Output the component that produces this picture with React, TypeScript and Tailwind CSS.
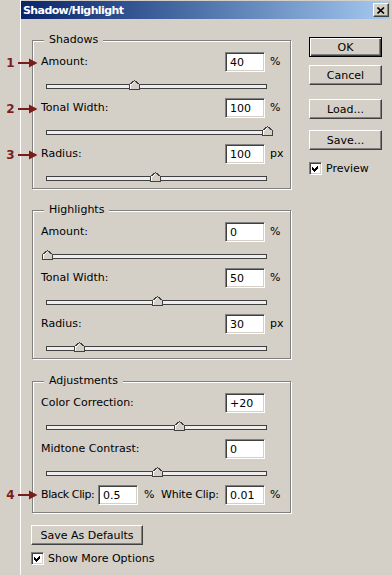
import type { ReactNode } from 'react';

interface SliderRow {
  label: string;
  value: string;
  unit: string;
  thumb: number;
}

const shadows: SliderRow[] = [
  { label: 'Amount:', value: '40', unit: '%', thumb: 88 },
  { label: 'Tonal Width:', value: '100', unit: '%', thumb: 221 },
  { label: 'Radius:', value: '100', unit: 'px', thumb: 109 },
];

const highlights: SliderRow[] = [
  { label: 'Amount:', value: '0', unit: '%', thumb: 1 },
  { label: 'Tonal Width:', value: '50', unit: '%', thumb: 111 },
  { label: 'Radius:', value: '30', unit: 'px', thumb: 33 },
];

const adjustments: SliderRow[] = [
  { label: 'Color Correction:', value: '+20', unit: '', thumb: 133 },
  { label: 'Midtone Contrast:', value: '0', unit: '', thumb: 111 },
];

// callouts drawn over the dialog, y = top of the 14px strip
const callouts = [
  { n: '1', top: 'top-[56px]' },
  { n: '2', top: 'top-[102px]' },
  { n: '3', top: 'top-[148px]' },
  { n: '4', top: 'top-[488px]' },
];

function Field({ value }: { value: string }) {
  return (
    <div className="w-[40px] h-[20px] shrink-0 bg-white border border-t-[#808080] border-l-[#808080] border-r-white border-b-white shadow-[inset_1px_1px_0_#404040,inset_-1px_-1px_0_#d4d0c8] pl-[4px] flex items-center leading-none">
      {value}
    </div>
  );
}

function Thumb() {
  return (
    <svg width="11" height="10" viewBox="0 0 11 10" shapeRendering="crispEdges">
      <polygon points="0.5,9.5 0.5,4.5 5.5,0.5 10.5,4.5 10.5,9.5" fill="#d4d0c8" stroke="#404040" />
      <polyline points="1.5,9 1.5,5 5.5,1.7" fill="none" stroke="#ffffff" />
    </svg>
  );
}

function Slider({ thumb }: { thumb: number }) {
  return (
    <div className="relative mt-[12px] ml-[13px] w-[221px] h-[5px] border border-[#404040] bg-[#eeeeee]">
      <div className="absolute -bottom-[2px] h-[10px]" style={{ left: thumb - 6 }}>
        <Thumb />
      </div>
    </div>
  );
}

function Row({ row }: { row: SliderRow }) {
  return (
    <div className="flex flex-col">
      <div className="flex items-center h-[20px] pl-[8px]">
        <span className="flex-1 whitespace-nowrap">{row.label}</span>
        <Field value={row.value} />
        <span className="ml-[5px] w-[20px]">{row.unit}</span>
      </div>
      <Slider thumb={row.thumb} />
    </div>
  );
}

function GroupBox({ title, children }: { title: string; children: ReactNode }) {
  return (
    <div className="relative ml-[1px] w-[259px] border border-[#808080] shadow-[inset_1px_1px_0_#ffffff,1px_1px_0_#ffffff] pt-[11px] pb-[7px] flex flex-col gap-[9px]">
      <span className="absolute left-[11px] -top-[8px] px-[5px] bg-[#d4d0c8] leading-[13px]">{title}</span>
      {children}
    </div>
  );
}

function Button({ label, main, className = '' }: { label: string; main?: boolean; className?: string }) {
  const edge = main
    ? 'border-black shadow-[inset_1px_1px_0_#ffffff,inset_-1px_-1px_0_#404040,inset_-2px_-2px_0_#808080]'
    : 'border-t-white border-l-white border-r-[#404040] border-b-[#404040] shadow-[inset_-1px_-1px_0_#808080]';
  return (
    <div className={`h-[20px] border bg-[#d4d0c8] flex items-center justify-center leading-none ${edge} ${className}`}>
      {label}
    </div>
  );
}

function CheckBox() {
  return (
    <div className="w-[13px] h-[13px] shrink-0 bg-white border border-t-[#808080] border-l-[#808080] border-r-white border-b-white shadow-[inset_1px_1px_0_#404040,inset_-1px_-1px_0_#d4d0c8] flex items-center justify-center">
      <svg width="7" height="7" viewBox="0 0 7 7" shapeRendering="crispEdges">
        <polygon points="0,2 2,4 6,0 6,3 2,7 0,5" fill="#000000" />
      </svg>
    </div>
  );
}

export default function App() {
  return (
    <div className="relative w-[392px] h-[575px] overflow-hidden bg-[#d4d0c8] flex font-['DejaVu_Sans',sans-serif] text-[11px] text-black">
      <div className="w-[20px] shrink-0" />

      <div className="w-[372px] shrink-0 border-l border-white pr-[2px] pt-[1px] flex flex-col">
        {/* caption */}
        <div className="h-[18px] bg-linear-to-r from-[#0a246a] to-[#a6caf0] flex items-center justify-between pl-[2px] pr-[1px]">
          <span className="text-white font-bold tracking-[-0.6px] leading-none">Shadow/Highlight</span>
          <div className="w-[16px] h-[14px] bg-[#d4d0c8] border border-t-white border-l-white border-r-[#404040] border-b-[#404040] shadow-[inset_-1px_-1px_0_#808080] flex items-center justify-center">
            <svg width="8" height="7" viewBox="0 0 8 7">
              <path d="M0.5 0.5 L7 6.5 M7 0.5 L0.5 6.5" stroke="#000000" strokeWidth="1.6" />
            </svg>
          </div>
        </div>

        <div className="flex pl-[10px]">
          <div className="w-[261px] shrink-0 pt-[21px] flex flex-col">
            <GroupBox title="Shadows">
              {shadows.map((r) => (
                <Row key={r.label} row={r} />
              ))}
            </GroupBox>

            <div className="mt-[21px]">
              <GroupBox title="Highlights">
                {highlights.map((r) => (
                  <Row key={r.label} row={r} />
                ))}
              </GroupBox>
            </div>

            <div className="mt-[22px]">
              <GroupBox title="Adjustments">
                {adjustments.map((r) => (
                  <Row key={r.label} row={r} />
                ))}
                <div className="flex items-center h-[20px] pl-[8px]">
                  <span className="w-[57px] tracking-[-0.4px] whitespace-nowrap">Black Clip:</span>
                  <Field value="0.5" />
                  <span className="ml-[6px] w-[17px]">%</span>
                  <span className="w-[64px] tracking-[-0.2px] whitespace-nowrap">White Clip:</span>
                  <Field value="0.01" />
                  <span className="ml-[5px] w-[20px]">%</span>
                </div>
              </GroupBox>
            </div>

            <Button label="Save As Defaults" className="mt-[12px] w-[112px]" />
            <div className="mt-[7px] flex items-center gap-[4px]">
              <CheckBox />
              <span className="leading-none">Show More Options</span>
            </div>
          </div>

          <div className="ml-[17px] w-[73px] pt-[18px] flex flex-col">
            <Button label="OK" main />
            <Button label="Cancel" className="mt-[8px]" />
            <Button label="Load..." className="mt-[14px]" />
            <Button label="Save..." className="mt-[11px]" />
            <div className="mt-[12px] flex items-center gap-[4px]">
              <CheckBox />
              <span className="leading-none">Preview</span>
            </div>
          </div>
        </div>
      </div>

      {callouts.map((c) => (
        <div key={c.n} className={`absolute left-[6px] ${c.top} h-[14px] flex items-center text-[#7b1c1c]`}>
          <span className="w-[9px] text-center font-bold text-[12px] leading-none">{c.n}</span>
          <svg width="20" height="10" viewBox="0 0 20 10" className="ml-[3px]">
            <rect x="0" y="4" width="12" height="2" fill="#7b1c1c" />
            <polygon points="11,0.5 19.5,5 11,9.5" fill="#7b1c1c" />
          </svg>
        </div>
      ))}
    </div>
  );
}
